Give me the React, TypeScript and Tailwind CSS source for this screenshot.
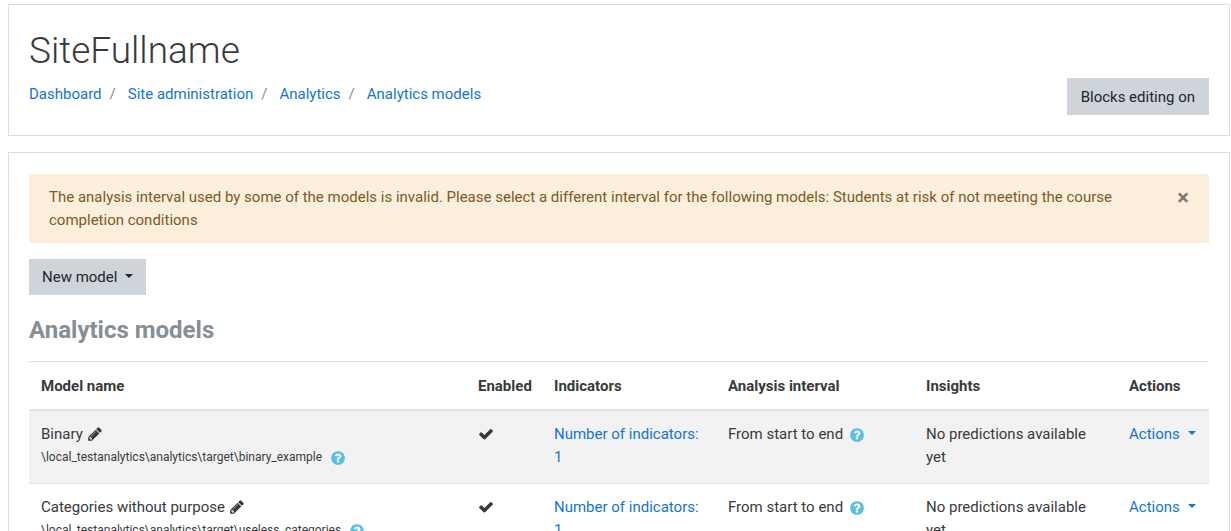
import { useState } from 'react'

interface Model {
  id: number
  name: string
  target: string
  indicators: number
  interval: string
  insights: string
}

const BREADCRUMBS = ['Dashboard', 'Site administration', 'Analytics', 'Analytics models']

const MODELS: Model[] = [
  {
    id: 1,
    name: 'Binary',
    target: '\\local_testanalytics\\analytics\\target\\binary_example',
    indicators: 1,
    interval: 'From start to end',
    insights: 'No predictions available yet',
  },
  {
    id: 2,
    name: 'Categories without purpose',
    target: '\\local_testanalytics\\analytics\\target\\useless_categories',
    indicators: 1,
    interval: 'From start to end',
    insights: 'No predictions available yet',
  },
]

const ICONS = {
  pencil:
    'M491 1536l91-91-235-235-91 91v107h128v128h107zm523-928q0-22-22-22-10 0-17 7l-542 542q-7 7-7 17 0 22 22 22 10 0 17-7l542-542q7-7 7-17zm-54-192l416 416-832 832h-416v-416zm683 96q0 53-37 90l-166 166-416-416 166-165q36-38 90-38 53 0 91 38l235 234q37 39 37 91z',
  check:
    'M1671 566q0 40-28 68l-724 724-136 136q-28 28-68 28t-68-28l-136-136-362-362q-28-28-28-68t28-68l136-136q28-28 68-28t68 28l294 295 656-657q28-28 68-28t68 28l136 136q28 28 28 68z',
  help:
    'M1024 1376v-192q0-14-9-23t-23-9h-192q-14 0-23 9t-9 23v192q0 14 9 23t23 9h192q14 0 23-9t9-23zm256-672q0-88-55.5-163t-138.5-116-170-41q-243 0-371 213-15 24 8 42l132 100q7 6 19 6 16 0 25-12 53-68 86-92 34-24 86-24 48 0 85.5 26t37.5 59q0 38-20 61t-68 45q-63 28-115.5 86.5t-52.5 125.5v36q0 14 9 23t23 9h192q14 0 23-9t9-23q0-19 21.5-49.5t54.5-49.5q32-18 49-28.5t46-35 44.5-48 28-60.5 12.5-81zm384 192q0 209-103 385.5t-279.5 279.5-385.5 103-385.5-103-279.5-279.5-103-385.5 103-385.5 279.5-279.5 385.5-103 385.5 103 279.5 279.5 103 385.5z',
}

function Icon({ name }: { name: keyof typeof ICONS }) {
  return (
    <svg viewBox="0 0 1792 1792" fill="currentColor" aria-hidden="true" className="size-4 shrink-0">
      <path d={ICONS[name]} />
    </svg>
  )
}

function Caret() {
  return (
    <svg viewBox="0 0 8 4" fill="currentColor" aria-hidden="true" className="mb-1 h-1 w-2">
      <path d="M0 0h8L4 4z" />
    </svg>
  )
}

function HelpButton() {
  return (
    <button type="button" aria-label="Help" className="text-[#5bc0de]">
      <Icon name="help" />
    </button>
  )
}

function ModelRow({ model }: { model: Model }) {
  return (
    <tr className="align-top odd:bg-[#f2f2f2] [&>td]:border-b [&>td]:border-[#dee2e6] [&>td]:px-3 [&>td]:pt-3 [&>td]:pb-3.5">
      <td>
        <div className="flex items-center gap-1">
          {model.name}
          <button type="button" aria-label="Edit model name" className="pb-0.5">
            <Icon name="pencil" />
          </button>
        </div>
        <div className="flex items-center gap-2 text-[12px] leading-[23px]">
          {model.target}
          <HelpButton />
        </div>
      </td>
      <td>
        <div className="flex h-[23px] items-center pb-0.5">
          <Icon name="check" />
        </div>
      </td>
      <td>
        <a href="#" className="text-[#1177d1]">
          Number of indicators: {model.indicators}
        </a>
      </td>
      <td>
        <div className="flex items-center gap-1.5">
          {model.interval}
          <HelpButton />
        </div>
      </td>
      <td>{model.insights}</td>
      <td>
        <button type="button" className="flex items-center gap-2 text-[#1177d1]">
          Actions
          <Caret />
        </button>
      </td>
    </tr>
  )
}

export default function App() {
  const [alertOpen, setAlertOpen] = useState(true)

  return (
    <div className="h-screen overflow-hidden bg-white pt-1 pr-px pl-2 font-['Roboto',sans-serif] text-[15px] leading-[23px] text-[#373a3c]">
      {/* Page header */}
      <header className="border border-[#dedede] p-5">
        <h1 className="mb-0.5 text-[37px] leading-[51px] font-light">SiteFullname</h1>
        <div className="flex items-start justify-between">
          <nav aria-label="Breadcrumb" className="pt-[5px]">
            <ol className="flex">
              {BREADCRUMBS.map((label, i) => (
                <li key={label} className="flex">
                  {i > 0 && <span className="pr-3 pl-2 text-[#868e96]">/</span>}
                  <a href="#" className="text-[#1177d1]">
                    {label}
                  </a>
                </li>
              ))}
            </ol>
          </nav>
          <button type="button" className="bg-[#ced4da] px-3.5 pt-2 pb-1.5 text-[#212529]">
            Blocks editing on
          </button>
        </div>
      </header>

      {/* Main content */}
      <main className="mt-4 border border-[#dedede] px-5 pt-[21px] pb-5">
        {alertOpen && (
          <div role="alert" className="mb-4 flex items-start justify-between bg-[#fcefdc] px-5 pt-3 pb-[11px] text-[#7d5a29]">
            <p className="pr-10">
              The analysis interval used by some of the models is invalid. Please select a different interval for the
              following models: Students at risk of not meeting the course completion conditions
            </p>
            <button
              type="button"
              aria-label="Close"
              onClick={() => setAlertOpen(false)}
              className="text-[22px] font-bold text-black opacity-50"
            >
              ×
            </button>
          </div>
        )}

        <button type="button" className="flex items-center gap-2 bg-[#ced4da] px-[13px] pt-[7px] pb-1.5 text-[#212529]">
          New model
          <Caret />
        </button>

        <h2 className="mt-[21px] mb-4 text-[24px] leading-[29px] font-bold text-[#868e96]">Analytics models</h2>

        <table className="w-full table-fixed border-separate border-spacing-0 text-left">
          <thead>
            <tr className="[&>th]:border-t [&>th]:border-b-2 [&>th]:border-[#dee2e6] [&>th]:px-3 [&>th]:pt-[13px] [&>th]:pb-[11px] [&>th]:font-bold">
              <th scope="col">Model name</th>
              <th scope="col" className="w-[76px]">Enabled</th>
              <th scope="col" className="w-[174px]">Indicators</th>
              <th scope="col" className="w-[198px]">Analysis interval</th>
              <th scope="col" className="w-[203px]">Insights</th>
              <th scope="col" className="w-[92px]">Actions</th>
            </tr>
          </thead>
          <tbody>
            {MODELS.map((model) => (
              <ModelRow key={model.id} model={model} />
            ))}
          </tbody>
        </table>
      </main>
    </div>
  )
}
